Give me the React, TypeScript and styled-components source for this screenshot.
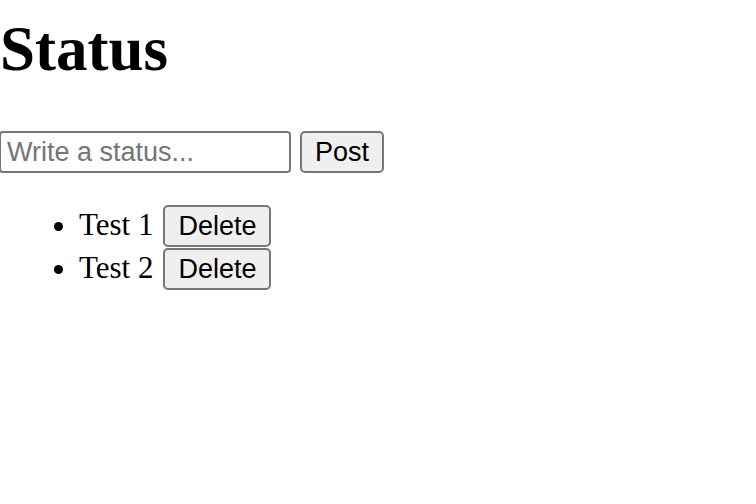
import * as React from 'react';
import styled, { createGlobalStyle } from 'styled-components';

const GlobalStyle = createGlobalStyle`
  body {
    margin: 0;
    background: #ffffff;
    font-family: "Liberation Serif", "Times New Roman", serif;
    color: #000000;
  }
`;

const Page = styled.div`
  padding: 0;
`;

const Title = styled.h1`
  font-family: "Liberation Serif", "Times New Roman", serif;
  font-size: 63px;
  font-weight: bold;
  line-height: 74px;
  margin: 12px 0 0;
`;

const Form = styled.form`
  display: flex;
  align-items: center;
  gap: 9px;
  margin-top: 45px;
`;

const Input = styled.input`
  box-sizing: border-box;
  width: 292px;
  height: 42px;
  margin-left: -1px;
  padding: 0 6px;
  border: 2px solid #767676;
  border-radius: 4px;
  font-family: "Liberation Sans", Arial, sans-serif;
  font-size: 27px;
  color: #000000;
  background: #ffffff;

  &::placeholder {
    color: #757575;
  }
`;

const Button = styled.button<{ $width: number }>`
  box-sizing: border-box;
  width: ${(p) => p.$width}px;
  height: 42px;
  padding: 0;
  border: 2px solid #767676;
  border-radius: 5px;
  background: #efefef;
  font-family: "Liberation Sans", Arial, sans-serif;
  font-size: 27px;
  color: #000000;
`;

const List = styled.ul`
  margin: 32px 0 0;
  padding-left: 79px;
  font-size: 31px;
`;

const Item = styled.li`
  height: 43px;
  line-height: 40px;

  ${Button} {
    vertical-align: top;
    margin-left: 10px;
  }
`;

const statuses = ['Test 1', 'Test 2'];

const App: React.FC = () => {
  return (
    <Page>
      <GlobalStyle />
      <Title>Status</Title>
      <Form onSubmit={(e) => e.preventDefault()}>
        <Input placeholder="Write a status..." />
        <Button $width={84} type="submit">
          Post
        </Button>
      </Form>
      <List>
        {statuses.map((s) => (
          <Item key={s}>
            {s}
            <Button $width={108} type="button">
              Delete
            </Button>
          </Item>
        ))}
      </List>
    </Page>
  );
};

export default App;
